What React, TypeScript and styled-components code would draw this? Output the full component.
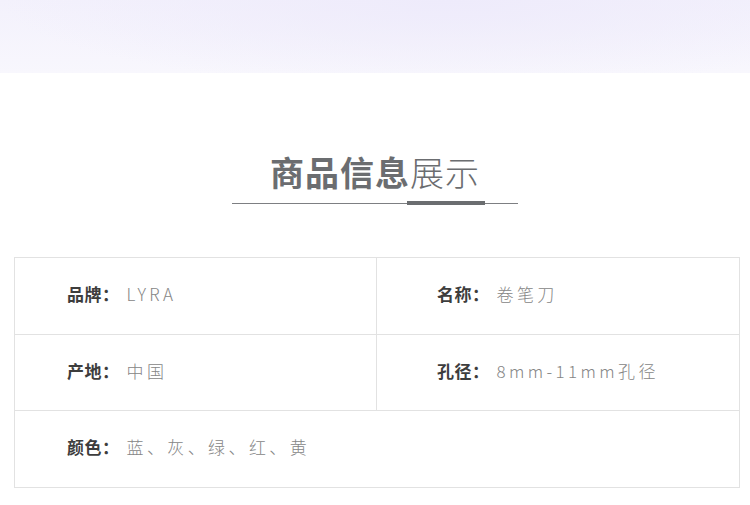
import React from 'react';
import styled, { createGlobalStyle } from 'styled-components';

const GlobalStyle = createGlobalStyle`
    html, body {
        margin: 0;
        padding: 0;
        background: #ffffff;
    }
    body {
        font-family: "Noto Sans CJK SC", "Noto Sans", sans-serif;
    }
`

const Page = styled.div`
    width: 750px;
    height: 505px;
    overflow: hidden;
    background: #ffffff;
`

// faint lavender strip left over from the image above
const TopBand = styled.div`
    height: 73px;
    background:
        radial-gradient(ellipse 60% 120% at 60% 0%, #eeebfb 0%, rgba(238, 235, 251, 0) 100%),
        linear-gradient(180deg, #f3f1fc 0%, #f8f7fd 100%);
`

const Heading = styled.div`
    display: flex;
    flex-direction: column;
    align-items: center;
    padding-top: 79px;
`

const Title = styled.h2`
    margin: 0;
    font-size: 34px;
    line-height: 40px;
    letter-spacing: 1px;
    color: #6b6d70;
    font-weight: 700;
`

const Light = styled.span`
    font-weight: 300;
`

const Rule = styled.div`
    position: relative;
    width: 286px;
    height: 5px;
    margin-top: 9px;
    display: flex;
    align-items: center;

    &::before {
        content: '';
        display: block;
        width: 100%;
        height: 1px;
        background: #7d7f82;
    }
`

const RuleMark = styled.div`
    position: absolute;
    left: 175px;
    top: 0;
    width: 78px;
    height: 4px;
    background: #6b6d70;
`

const Table = styled.div`
    margin: 51px 0 0 14px;
    width: 724px;
    display: grid;
    grid-template-columns: 1fr 1fr;
    border: 1px solid #e2e2e2;
    border-bottom: none;
`

const Cell = styled.div<{ $pad: number; $wide?: boolean; $h: number }>`
    grid-column: ${p => p.$wide ? '1 / span 2' : 'auto'};
    box-sizing: border-box;
    height: ${p => p.$h + 1}px;
    display: flex;
    align-items: center;
    padding: 0 0 5px ${p => p.$pad}px;
    border-bottom: 1px solid #e2e2e2;
    font-size: 17px;

    &:nth-child(odd):not(:last-child) {
        border-right: 1px solid #e2e2e2;
    }
`

const Label = styled.span`
    font-weight: 700;
    color: #3d3d3d;
    letter-spacing: 0.5px;
    margin-right: 7px;
`

const Value = styled.span`
    font-weight: 300;
    color: #858585;
    letter-spacing: 3.4px;
`

const specs = [
    { label: '品牌：', value: 'LYRA', h: 76 },
    { label: '名称：', value: '卷笔刀', h: 76 },
    { label: '产地：', value: '中国', h: 75 },
    { label: '孔径：', value: '8mm-11mm孔径', h: 75 },
    { label: '颜色：', value: '蓝、灰、绿、红、黄', h: 76, wide: true },
]

export default function App() {
    return (
        <Page>
            <GlobalStyle />
            <TopBand />
            <Heading>
                <Title>商品信息<Light>展示</Light></Title>
                <Rule>
                    <RuleMark />
                </Rule>
            </Heading>
            <Table>
                {specs.map((s, i) => (
                    <Cell key={s.label} $h={s.h} $wide={s.wide} $pad={i % 2 === 1 && !s.wide ? 60 : 52}>
                        <Label>{s.label}</Label>
                        <Value>{s.value}</Value>
                    </Cell>
                ))}
            </Table>
        </Page>
    );
}
